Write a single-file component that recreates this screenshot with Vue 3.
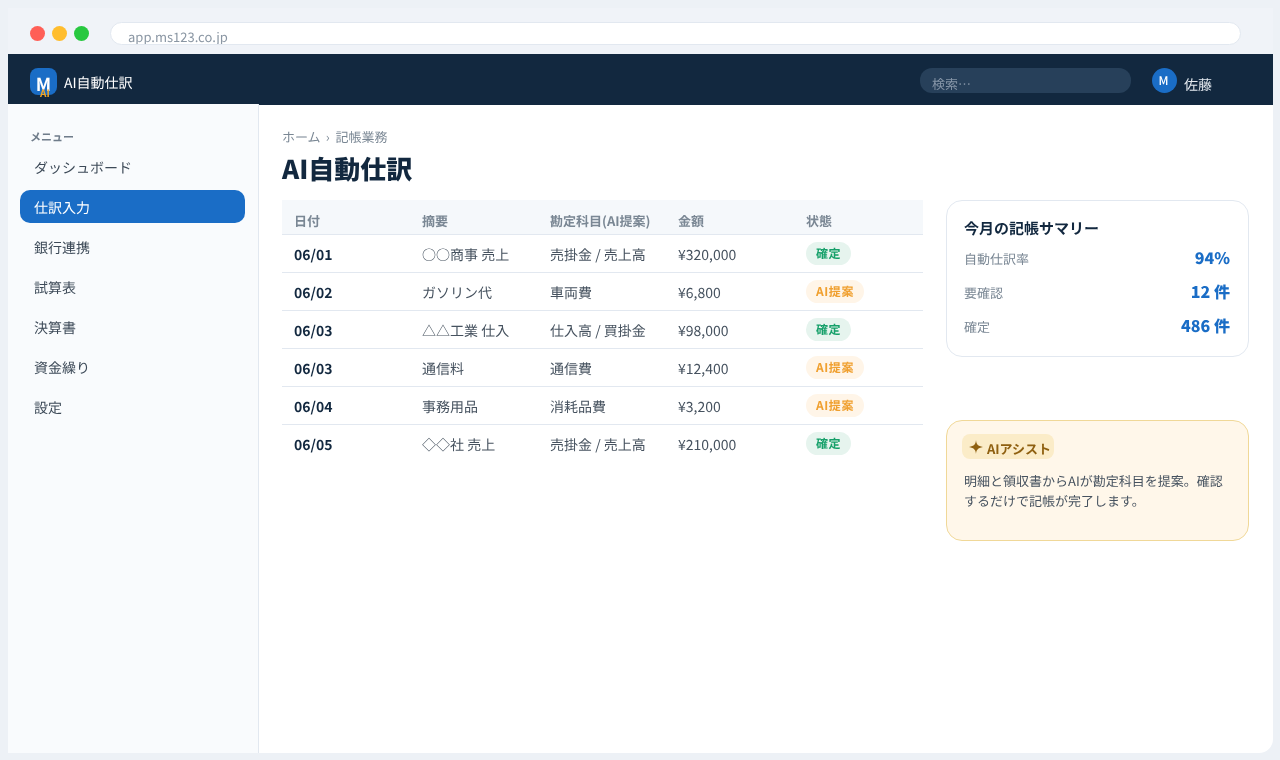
<script setup>
const menu = ['ダッシュボード', '仕訳入力', '銀行連携', '試算表', '決算書', '資金繰り', '設定']
const rows = [
  { date: '06/01', desc: '○○商事 売上', account: '売掛金 / 売上高', amount: '¥320,000', ok: true },
  { date: '06/02', desc: 'ガソリン代', account: '車両費', amount: '¥6,800', ok: false },
  { date: '06/03', desc: '△△工業 仕入', account: '仕入高 / 買掛金', amount: '¥98,000', ok: true },
  { date: '06/03', desc: '通信料', account: '通信費', amount: '¥12,400', ok: false },
  { date: '06/04', desc: '事務用品', account: '消耗品費', amount: '¥3,200', ok: false },
  { date: '06/05', desc: '◇◇社 売上', account: '売掛金 / 売上高', amount: '¥210,000', ok: true },
]
const stats = [
  { label: '自動仕訳率', value: '94%' },
  { label: '要確認', value: '12 件' },
  { label: '確定', value: '486 件' },
]
</script>

<template>
  <div class="page">
    <div class="frame">
      <div class="chrome">
        <span class="dot red"></span>
        <span class="dot yellow"></span>
        <span class="dot green"></span>
        <div class="url"><span class="url-text">app.ms123.co.jp</span></div>
      </div>
      <header class="nav">
        <div class="logo"><span class="logo-m">M</span><span class="logo-ai">AI</span></div>
        <span class="brand">AI自動仕訳</span>
        <div class="search">検索…</div>
        <div class="avatar">M</div>
        <span class="user">佐藤</span>
      </header>
      <div class="body">
        <aside class="side">
          <div class="side-title">メニュー</div>
          <div v-for="(m, i) in menu" :key="m" class="item" :class="{ active: i === 1 }">{{ m }}</div>
        </aside>
        <main class="main">
          <div class="crumbs">ホーム<span class="sep">›</span>記帳業務</div>
          <h1 class="title">AI自動仕訳</h1>
          <div class="columns">
            <table class="table">
              <colgroup><col class="c" /><col class="c" /><col class="c" /><col class="c" /><col /></colgroup>
              <thead>
                <tr><th>日付</th><th>摘要</th><th>勘定科目(AI提案)</th><th>金額</th><th>状態</th></tr>
              </thead>
              <tbody>
                <tr v-for="(r, i) in rows" :key="i">
                  <td class="date">{{ r.date }}</td>
                  <td>{{ r.desc }}</td>
                  <td>{{ r.account }}</td>
                  <td>{{ r.amount }}</td>
                  <td class="status"><span class="badge" :class="r.ok ? 'ok' : 'ai'">{{ r.ok ? '確定' : 'AI提案' }}</span></td>
                </tr>
              </tbody>
            </table>
            <div class="right">
              <section class="card">
                <h2 class="card-title">今月の記帳サマリー</h2>
                <div v-for="s in stats" :key="s.label" class="stat">
                  <span class="stat-label">{{ s.label }}</span>
                  <span class="stat-value">{{ s.value }}</span>
                </div>
              </section>
              <section class="assist">
                <div class="assist-tag">
                  <svg class="spark" width="14" height="14" viewBox="0 0 14 14">
                    <path d="M7 0 C7.4 4 8.6 6 14 7 C8.6 8 7.4 10 7 14 C6.6 10 5.4 8 0 7 C5.4 6 6.6 4 7 0 Z" fill="#8f6010" />
                  </svg>
                  <span class="tag-text">AIアシスト</span>
                </div>
                <p class="assist-text">明細と領収書からAIが勘定科目を提案。確認するだけで記帳が完了します。</p>
              </section>
            </div>
          </div>
        </main>
      </div>
    </div>
  </div>
</template>

<style>
html, body { margin: 0; background: #edf1f6; }
</style>

<style scoped>
.page {
  width: 1280px;
  height: 760px;
  box-sizing: border-box;
  padding: 8px 7px 7px 8px;
  background: #edf1f6;
  font-family: "Noto Sans CJK JP", "Noto Sans", sans-serif;
  text-rendering: geometricPrecision;
  overflow: hidden;
}
.frame {
  height: 745px;
  display: flex;
  flex-direction: column;
  background: #fff;
  border-radius: 0 0 14px 0;
  overflow: hidden;
  will-change: transform;
}
.chrome {
  height: 46px;
  flex: none;
  box-sizing: border-box;
  padding: 14px 32px 0 22px;
  display: flex;
  align-items: flex-start;
  background: #f0f3f8;
}
.dot { width: 15px; height: 15px; border-radius: 50%; margin: 3.5px 7px 0 0; flex: none; }
.red { background: #ff5f57; }
.yellow { background: #ffbd2e; }
.green { background: #28c840; margin-right: 21px; }
.url {
  flex: 1;
  height: 23px;
  box-sizing: border-box;
  background: #fff;
  border: 1px solid #e2e8f0;
  border-radius: 12px;
  padding-left: 17px;
  overflow: hidden;
  font-size: 13px;
  line-height: 28px;
  color: #8a96a3;
}
.nav {
  height: 51px;
  flex: none;
  box-sizing: border-box;
  padding: 14px 0 0 22px;
  display: flex;
  align-items: flex-start;
  background: #12283f;
}
.logo {
  width: 27px;
  height: 27px;
  border-radius: 8px;
  background: #1a6dc6;
  position: relative;
  flex: none;
  text-align: center;
  color: #fff;
}
.logo-m { font-size: 18px; font-weight: 700; line-height: 27px; display: block; padding-top: 3px; }
.logo-ai {
  position: absolute;
  left: 10px;
  top: 20px;
  font-size: 10px;
  line-height: 10px;
  font-weight: 700;
  color: #f5a623;
}
.brand { color: #fff; font-size: 14px; line-height: 31px; margin-left: 7px; width: 856px; flex: none; }
.search {
  width: 211px;
  height: 25px;
  flex: none;
  box-sizing: border-box;
  padding-left: 12px;
  border-radius: 12px;
  background: #27405a;
  color: #8796a8;
  font-size: 13px;
  line-height: 32px;
  overflow: hidden;
}
.avatar {
  width: 25px;
  height: 25px;
  margin-left: 21px;
  flex: none;
  box-sizing: border-box;
  padding-right: 2px;
  border-radius: 50%;
  background: #1a6dc6;
  color: #fff;
  font-size: 12px;
  font-weight: 500;
  line-height: 25px;
  text-align: center;
}
.user { color: #e4e9ef; font-size: 14px; line-height: 34px; margin-left: 7px; }
.body { flex: 1; display: flex; min-height: 0; }
.side {
  width: 251px;
  flex: none;
  box-sizing: border-box;
  margin-top: -1px;
  padding: 24px 13px 0 12px;
  background: #f9fbfd;
  border-right: 1px solid #e2e8f0;
}
.side-title { font-size: 11px; line-height: 18px; font-weight: 700; color: #6f7c8a; padding-left: 10px; margin-bottom: 4px; }
.item {
  height: 33px;
  margin-bottom: 7px;
  padding-left: 14px;
  font-size: 14px;
  line-height: 37px;
  color: #3d4a58;
  border-radius: 10px;
}
.item.active { background: #1a6dc6; color: #fff; }
.main { flex: 1; min-width: 0; box-sizing: border-box; padding: 22px 24px 0 23px; }
.crumbs { font-size: 13px; line-height: 20px; color: #7a8794; }
.sep { margin: 0 6px 0 5px; }
.title { margin: 2px 0 0; font-size: 26px; line-height: 40px; font-weight: 900; color: #12283f; }
.columns { display: flex; gap: 23px; margin-top: 11px; align-items: flex-start; }
.table { width: 641px; flex: none; border-collapse: collapse; table-layout: fixed; font-size: 14px; color: #46525f; }
.c { width: 128px; }
th {
  height: 34px;
  padding: 7px 12px 0;
  box-sizing: border-box;
  text-align: left;
  font-size: 13px;
  font-weight: 700;
  color: #7a8794;
  background: #f5f8fb;
  border-bottom: 1px solid #e2e8f0;
}
td {
  height: 38px;
  box-sizing: border-box;
  padding: 4px 12px 0;
  border-bottom: 1px solid #e2e8f0;
  vertical-align: middle;
  white-space: nowrap;
}
td.status { padding-top: 0; }
tbody tr:last-child td { border-bottom: 0; }
.date { font-weight: 700; color: #12283f; }
.badge {
  display: inline-block;
  padding: 0 10px;
  height: 23px;
  line-height: 24px;
  border-radius: 12px;
  font-size: 12px;
  font-weight: 700;
  letter-spacing: 0.6px;
  vertical-align: middle;
}
.ok { background: #e6f4ee; color: #16a06a; }
.ai { background: #fff5e8; color: #f0a030; }
.right { flex: 1; min-width: 0; }
.card {
  height: 157px;
  box-sizing: border-box;
  padding: 17px 18px 0 17px;
  background: #fff;
  border: 1px solid #e2e8f0;
  border-radius: 16px;
}
.card-title { margin: 0 0 1px; font-size: 15px; line-height: 22px; font-weight: 700; color: #12283f; }
.stat { height: 34px; display: flex; justify-content: space-between; align-items: center; }
.stat-label { font-size: 13px; color: #7a8794; }
.stat-value { font-size: 16px; font-weight: 900; color: #1a6dc6; position: relative; top: -1px; }
.assist {
  height: 121px;
  margin-top: 63px;
  box-sizing: border-box;
  padding: 13px 17px 0 15px;
  background: #fff7ea;
  border: 1px solid #f0d898;
  border-radius: 16px;
}
.assist-tag {
  display: inline-flex;
  align-items: center;
  height: 25px;
  padding: 0 3px 0 7px;
  gap: 4px;
  border-radius: 8px;
  background: #fbecc8;
  color: #8f6010;
  font-size: 13px;
  font-weight: 700;
}
.tag-text { padding-top: 4px; }
.assist-text { margin: 12px 0 0 2px; font-size: 13px; line-height: 20px; color: #46525f; }
</style>
